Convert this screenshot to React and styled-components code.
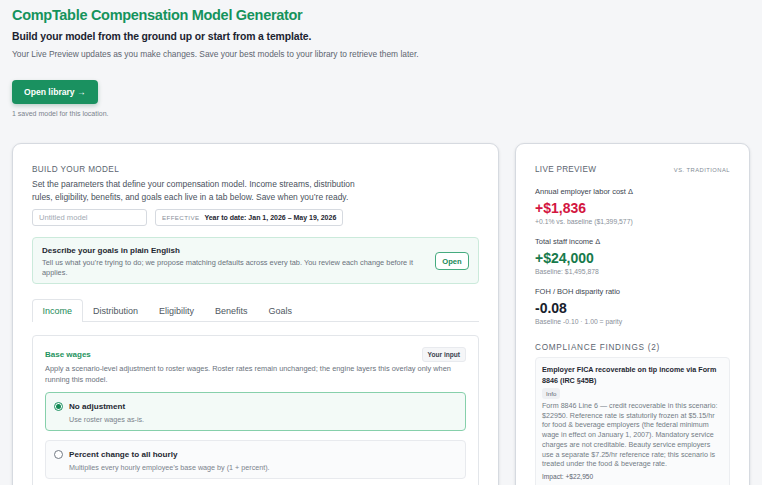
import React from "react";
import styled, { createGlobalStyle } from "styled-components";

const GlobalStyle = createGlobalStyle`
  body {
    margin: 0;
    background: #f5f6f8;
    font-family: "Liberation Sans", Arial, Helvetica, sans-serif;
    color: #1d2530;
  }
  * { box-sizing: border-box; }
`;

const Page = styled.div`
  padding: 5px 12px 0;
  height: 485px;
  overflow: hidden;
`;

const Title = styled.h1`
  margin: 0;
  font-size: 14.5px;
  line-height: 20px;
  letter-spacing: -0.3px;
  font-weight: 700;
  color: #15935c;
`;

const Subtitle = styled.h2`
  margin: 4px 0 0;
  font-size: 10.4px;
  line-height: 15px;
  letter-spacing: -0.1px;
  font-weight: 700;
  color: #1b2330;
`;

const Lead = styled.p`
  margin: 4px 0 0;
  font-size: 8.4px;
  line-height: 12px;
  color: #5d6570;
`;

const PrimaryButton = styled.button`
  display: block;
  margin-top: 20px;
  height: 24px;
  padding: 0 12px;
  border: none;
  border-radius: 4px;
  background: #1a9160;
  color: #fff;
  font-family: inherit;
  font-size: 8.6px;
  font-weight: 700;
  box-shadow: 0 2px 4px rgba(16, 90, 60, 0.25);
`;

const Note = styled.p`
  margin: 6px 0 0;
  font-size: 7px;
  line-height: 8px;
  color: #7b838d;
`;

const Columns = styled.div`
  display: grid;
  grid-template-columns: minmax(0, 1fr) 235px;
  gap: 16px;
  margin-top: 25px;
  align-items: start;
`;

const Card = styled.section`
  background: #fff;
  border: 1px solid #d6dae0;
  border-radius: 9px;
  box-shadow: 0 1px 3px rgba(20, 30, 50, 0.12);
  padding: 21px 19px 20px;
  min-height: 360px;
`;

const CardHeader = styled.div`
  display: flex;
  justify-content: space-between;
  align-items: center;
`;

const Eyebrow = styled.div`
  font-size: 8.2px;
  line-height: 10px;
  letter-spacing: ${(p) => p.$spacing || 0.36}px;
  color: #5c6570;
  text-transform: uppercase;
  margin-top: ${(p) => p.$top || 0}px;
`;

const Tiny = styled.span`
  font-size: 5.8px;
  letter-spacing: 0.08em;
  color: #838b95;
  text-transform: uppercase;
`;

const Body = styled.p`
  margin: 3px 0 0;
  font-size: 8.45px;
  line-height: 13px;
  color: #4a525d;
  max-width: 335px;
`;

const FieldRow = styled.div`
  display: flex;
  gap: 8px;
  margin-top: 5px;
`;

const TextInput = styled.div`
  width: 115px;
  height: 17px;
  border: 1px solid #d6dae0;
  border-radius: 3px;
  padding: 0 6px;
  display: flex;
  align-items: center;
  font-size: 7.6px;
  color: #a3aab3;
`;

const Pill = styled.div`
  height: 17px;
  border: 1px solid #d6dae0;
  border-radius: 3px;
  padding: 0 6px;
  display: flex;
  align-items: center;
  gap: 5px;
  font-size: 7px;
  font-weight: 700;
  color: #1d2530;
`;

const PillLabel = styled.span`
  font-weight: 400;
  color: #8a919a;
  letter-spacing: 0.06em;
  font-size: 6.2px;
`;

const GoalBox = styled.div`
  margin-top: 11px;
  display: flex;
  align-items: center;
  justify-content: space-between;
  background: #f3faf7;
  border: 1px solid #cbeadb;
  border-radius: 4px;
  padding: 7px 9px 5px 9px;
`;

const GoalText = styled.div`
  max-width: 372px;
`;

const GoalTitle = styled.div`
  font-size: 8px;
  line-height: 11px;
  font-weight: 700;
  color: #1f2832;
`;

const GoalDesc = styled.div`
  margin-top: 1.5px;
  font-size: 7.4px;
  line-height: 10px;
  color: #6a727c;
`;

const OutlineButton = styled.button`
  height: 18px;
  width: 34px;
  padding: 0;
  border: 1px solid #45ab7f;
  border-radius: 4px;
  background: #fff;
  color: #1a8a58;
  font-family: inherit;
  font-size: 7.6px;
  font-weight: 700;
`;

const Tabs = styled.div`
  display: flex;
  margin-top: 15px;
  border-bottom: 1px solid #e2e5e9;
`;

const Tab = styled.div`
  height: 23px;
  padding: 0 9.5px;
  display: flex;
  align-items: center;
  font-size: 9px;
  color: ${(p) => (p.$active ? "#1a8a58" : "#4f5862")};
  border: 1px solid ${(p) => (p.$active ? "#e2e5e9" : "transparent")};
  border-bottom: none;
  border-radius: 4px 4px 0 0;
  margin-bottom: -1px;
  background: ${(p) => (p.$active ? "#fff" : "transparent")};
`;

const Section = styled.div`
  margin-top: 13px;
  border: 1px solid #e3e6ea;
  border-radius: 4px;
  padding: 11px 12px 12px;
`;

const SectionHead = styled.div`
  display: flex;
  justify-content: space-between;
  align-items: center;
  height: 15px;
`;

const SectionTitle = styled.div`
  font-size: 8px;
  font-weight: 700;
  color: #1f9461;
`;

const Badge = styled.span`
  height: 15px;
  display: flex;
  align-items: center;
  font-size: 6.6px;
  font-weight: 700;
  color: #3a434e;
  background: #f5f6f8;
  border: 1px solid #e8eaee;
  border-radius: 3px;
  padding: 0 5px;
`;

const SectionDesc = styled.div`
  margin-top: 1.5px;
  font-size: 7.4px;
  line-height: 11px;
  color: #6a727c;
  max-width: 412px;
`;

const Option = styled.div`
  margin-top: ${(p) => (p.$first ? 7 : 9)}px;
  height: 39px;
  display: flex;
  gap: 6px;
  padding: 8px 8px 0 8px;
  border-radius: 4px;
  border: 1px solid ${(p) => (p.$selected ? "#86d0ab" : "#e8eaee")};
  background: ${(p) => (p.$selected ? "#f3faf7" : "#fafbfc")};
`;

const Radio = styled.span`
  flex: none;
  width: 9px;
  height: 9px;
  margin-top: 1px;
  border-radius: 50%;
  border: 1px solid ${(p) => (p.$on ? "#1a9160" : "#737b85")};
  background: #fff;
  display: flex;
  align-items: center;
  justify-content: center;
  &::after {
    content: "";
    width: 5px;
    height: 5px;
    border-radius: 50%;
    background: ${(p) => (p.$on ? "#138a55" : "transparent")};
  }
`;

const OptionTitle = styled.div`
  font-size: 8.1px;
  line-height: 11px;
  font-weight: 700;
  color: #1f2832;
`;

const OptionDesc = styled.div`
  margin-top: 3px;
  font-size: 7.2px;
  color: #7a828c;
`;

const Metric = styled.div`
  margin-top: ${(p) => (p.$first ? 12 : 11)}px;
`;

const MetricLabel = styled.div`
  font-size: 7.5px;
  line-height: 10px;
  color: #3c4550;
`;

const MetricValue = styled.div`
  margin-top: 3px;
  font-size: 14px;
  line-height: 16px;
  font-weight: 700;
  color: ${(p) => p.$color};
`;

const MetricSub = styled.div`
  margin-top: 2px;
  font-size: 6.8px;
  line-height: 8px;
  color: #8a919a;
`;

const Finding = styled.div`
  margin-top: 4px;
  background: #fafbfc;
  border: 1px solid #eceef1;
  border-radius: 4px;
  padding: 6px 7px 10px 6px;
`;

const FindingTitle = styled.div`
  font-size: 7.2px;
  line-height: 11px;
  font-weight: 700;
  color: #1f2832;
`;

const InfoTag = styled.div`
  display: flex;
  align-items: center;
  width: fit-content;
  height: 11px;
  margin-top: 2px;
  font-size: 6.2px;
  color: #5c6570;
  background: #eef0f3;
  border-radius: 3px;
  padding: 0 4px;
`;

const FindingBody = styled.div`
  margin-top: 3px;
  font-size: 7.15px;
  line-height: 9.7px;
  color: #737b85;
`;

const Impact = styled.div`
  margin-top: 3px;
  font-size: 6.6px;
  line-height: 8px;
  color: #5c6570;
`;

const options = [
  { title: "No adjustment", desc: "Use roster wages as-is.", selected: true },
  {
    title: "Percent change to all hourly",
    desc: "Multiplies every hourly employee\u2019s base wage by (1 + percent).",
  },
];

const tabs = ["Income", "Distribution", "Eligibility", "Benefits", "Goals"];

const metrics = [
  {
    label: "Annual employer labor cost Δ",
    value: "+$1,836",
    color: "#d3163f",
    sub: "+0.1% vs. baseline ($1,399,577)",
  },
  {
    label: "Total staff income Δ",
    value: "+$24,000",
    color: "#177a4b",
    sub: "Baseline: $1,495,878",
  },
  {
    label: "FOH / BOH disparity ratio",
    value: "-0.08",
    color: "#18212c",
    sub: "Baseline -0.10 · 1.00 = parity",
  },
];

export default function App() {
  return (
    <Page>
      <GlobalStyle />
      <Title>CompTable Compensation Model Generator</Title>
      <Subtitle>Build your model from the ground up or start from a template.</Subtitle>
      <Lead>
        Your Live Preview updates as you make changes. Save your best models to
        your library to retrieve them later.
      </Lead>
      <PrimaryButton>Open library →</PrimaryButton>
      <Note>1 saved model for this location.</Note>

      <Columns>
        <Card>
          <Eyebrow>Build your model</Eyebrow>
          <Body>
            Set the parameters that define your compensation model. Income
            streams, distribution rules, eligibility, benefits, and goals each
            live in a tab below. Save when you’re ready.
          </Body>
          <FieldRow>
            <TextInput>Untitled model</TextInput>
            <Pill>
              <PillLabel>EFFECTIVE</PillLabel>
              Year to date: Jan 1, 2026 – May 19, 2026
            </Pill>
          </FieldRow>
          <GoalBox>
            <GoalText>
              <GoalTitle>Describe your goals in plain English</GoalTitle>
              <GoalDesc>
                Tell us what you’re trying to do; we propose matching defaults
                across every tab. You review each change before it applies.
              </GoalDesc>
            </GoalText>
            <OutlineButton>Open</OutlineButton>
          </GoalBox>
          <Tabs>
            {tabs.map((t, i) => (
              <Tab key={t} $active={i === 0}>
                {t}
              </Tab>
            ))}
          </Tabs>
          <Section>
            <SectionHead>
              <SectionTitle>Base wages</SectionTitle>
              <Badge>Your input</Badge>
            </SectionHead>
            <SectionDesc>
              Apply a scenario-level adjustment to roster wages. Roster rates
              remain unchanged; the engine layers this overlay only when running
              this model.
            </SectionDesc>
            {options.map((o, i) => (
              <Option key={o.title} $selected={o.selected} $first={i === 0}>
                <Radio $on={o.selected} />
                <div>
                  <OptionTitle>{o.title}</OptionTitle>
                  <OptionDesc>{o.desc}</OptionDesc>
                </div>
              </Option>
            ))}
          </Section>
        </Card>

        <Card>
          <CardHeader>
            <Eyebrow $spacing={0.28}>Live preview</Eyebrow>
            <Tiny>vs. traditional</Tiny>
          </CardHeader>
          {metrics.map((m, i) => (
            <Metric key={m.label} $first={i === 0}>
              <MetricLabel>{m.label}</MetricLabel>
              <MetricValue $color={m.color}>{m.value}</MetricValue>
              <MetricSub>{m.sub}</MetricSub>
            </Metric>
          ))}
          <Eyebrow $top={17} $spacing={0.75}>
            Compliance findings (2)
          </Eyebrow>
          <Finding>
            <FindingTitle>
              Employer FICA recoverable on tip income via Form 8846 (IRC §45B)
            </FindingTitle>
            <InfoTag>Info</InfoTag>
            <FindingBody>
              Form 8846 Line 6 — credit recoverable in this scenario: $22950.
              Reference rate is statutorily frozen at $5.15/hr for food &amp;
              beverage employers (the federal minimum wage in effect on January
              1, 2007). Mandatory service charges are not creditable. Beauty
              service employers use a separate $7.25/hr reference rate; this
              scenario is treated under the food &amp; beverage rate.
            </FindingBody>
            <Impact>Impact: +$22,950</Impact>
          </Finding>
        </Card>
      </Columns>
    </Page>
  );
}
